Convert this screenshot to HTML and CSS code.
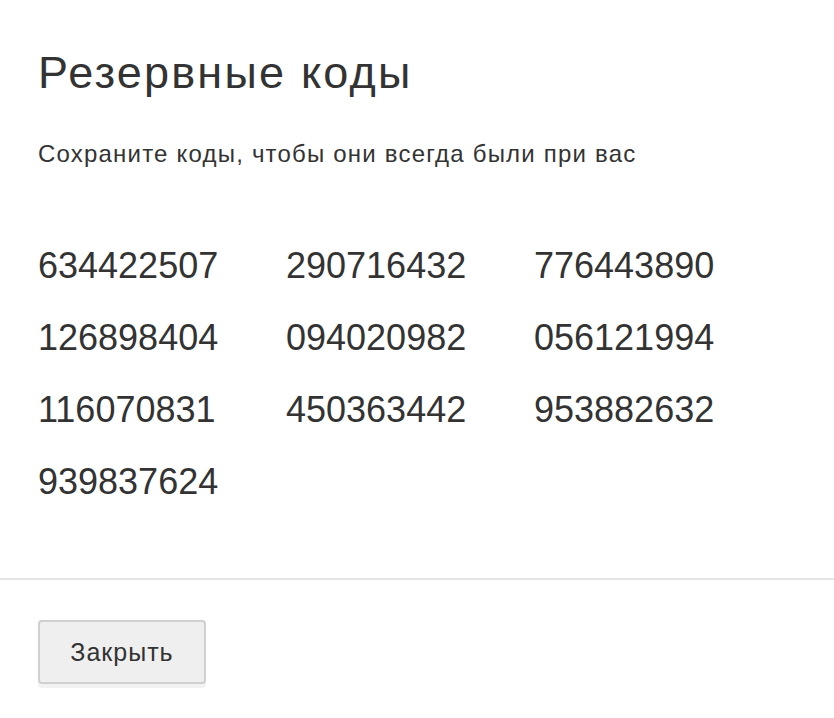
FILE: index.html
```html
<!DOCTYPE html>
<html lang="ru">
<head>
    <meta charset="UTF-8">
    <meta name="viewport" content="width=device-width, initial-scale=1.0">
    <title>Резервные коды</title>
    <link rel="stylesheet" href="styles.css">
</head>
<body>
    <div class="dialog">
        <div class="dialog-body">
            <h1>Резервные коды</h1>
            <p class="hint">Сохраните коды, чтобы они всегда были при вас</p>

            <div class="codes">
                <span>634422507</span>
                <span>290716432</span>
                <span>776443890</span>
                <span>126898404</span>
                <span>094020982</span>
                <span>056121994</span>
                <span>116070831</span>
                <span>450363442</span>
                <span>953882632</span>
                <span>939837624</span>
            </div>
        </div>

        <div class="dialog-footer">
            <button type="button">Закрыть</button>
        </div>
    </div>
</body>
</html>
```

FILE: styles.css
```css
body {
    font-family: "Liberation Sans", Arial, sans-serif;
    background-color: #ffffff;
    margin: 0;
    color: #333333;
}

.dialog {
    width: 834px;
}

.dialog-body {
    padding: 46px 38px 60px;
}

h1 {
    font-size: 45px;
    font-weight: 400;
    line-height: 54px;
    letter-spacing: 2.2px;
    margin: 0 0 40px;
}

.hint {
    font-size: 24px;
    line-height: 28px;
    letter-spacing: 1.2px;
    margin: 0 0 62px;
}

.codes {
    display: grid;
    grid-template-columns: repeat(3, 248px);
    grid-auto-rows: 72px;
    font-size: 36px;
    line-height: 72px;
}

.dialog-footer {
    border-top: 2px solid #e5e5e5;
    padding: 40px 38px 30px;
}

button {
    font-family: inherit;
    width: 168px;
    height: 64px;
    font-size: 25px;
    letter-spacing: 1px;
    color: #333333;
    background-color: #efefef;
    border: 2px solid #d0d0d0;
    border-radius: 4px;
    box-shadow: 0 4px 0 #f2f2f2;
    cursor: pointer;
}
```
